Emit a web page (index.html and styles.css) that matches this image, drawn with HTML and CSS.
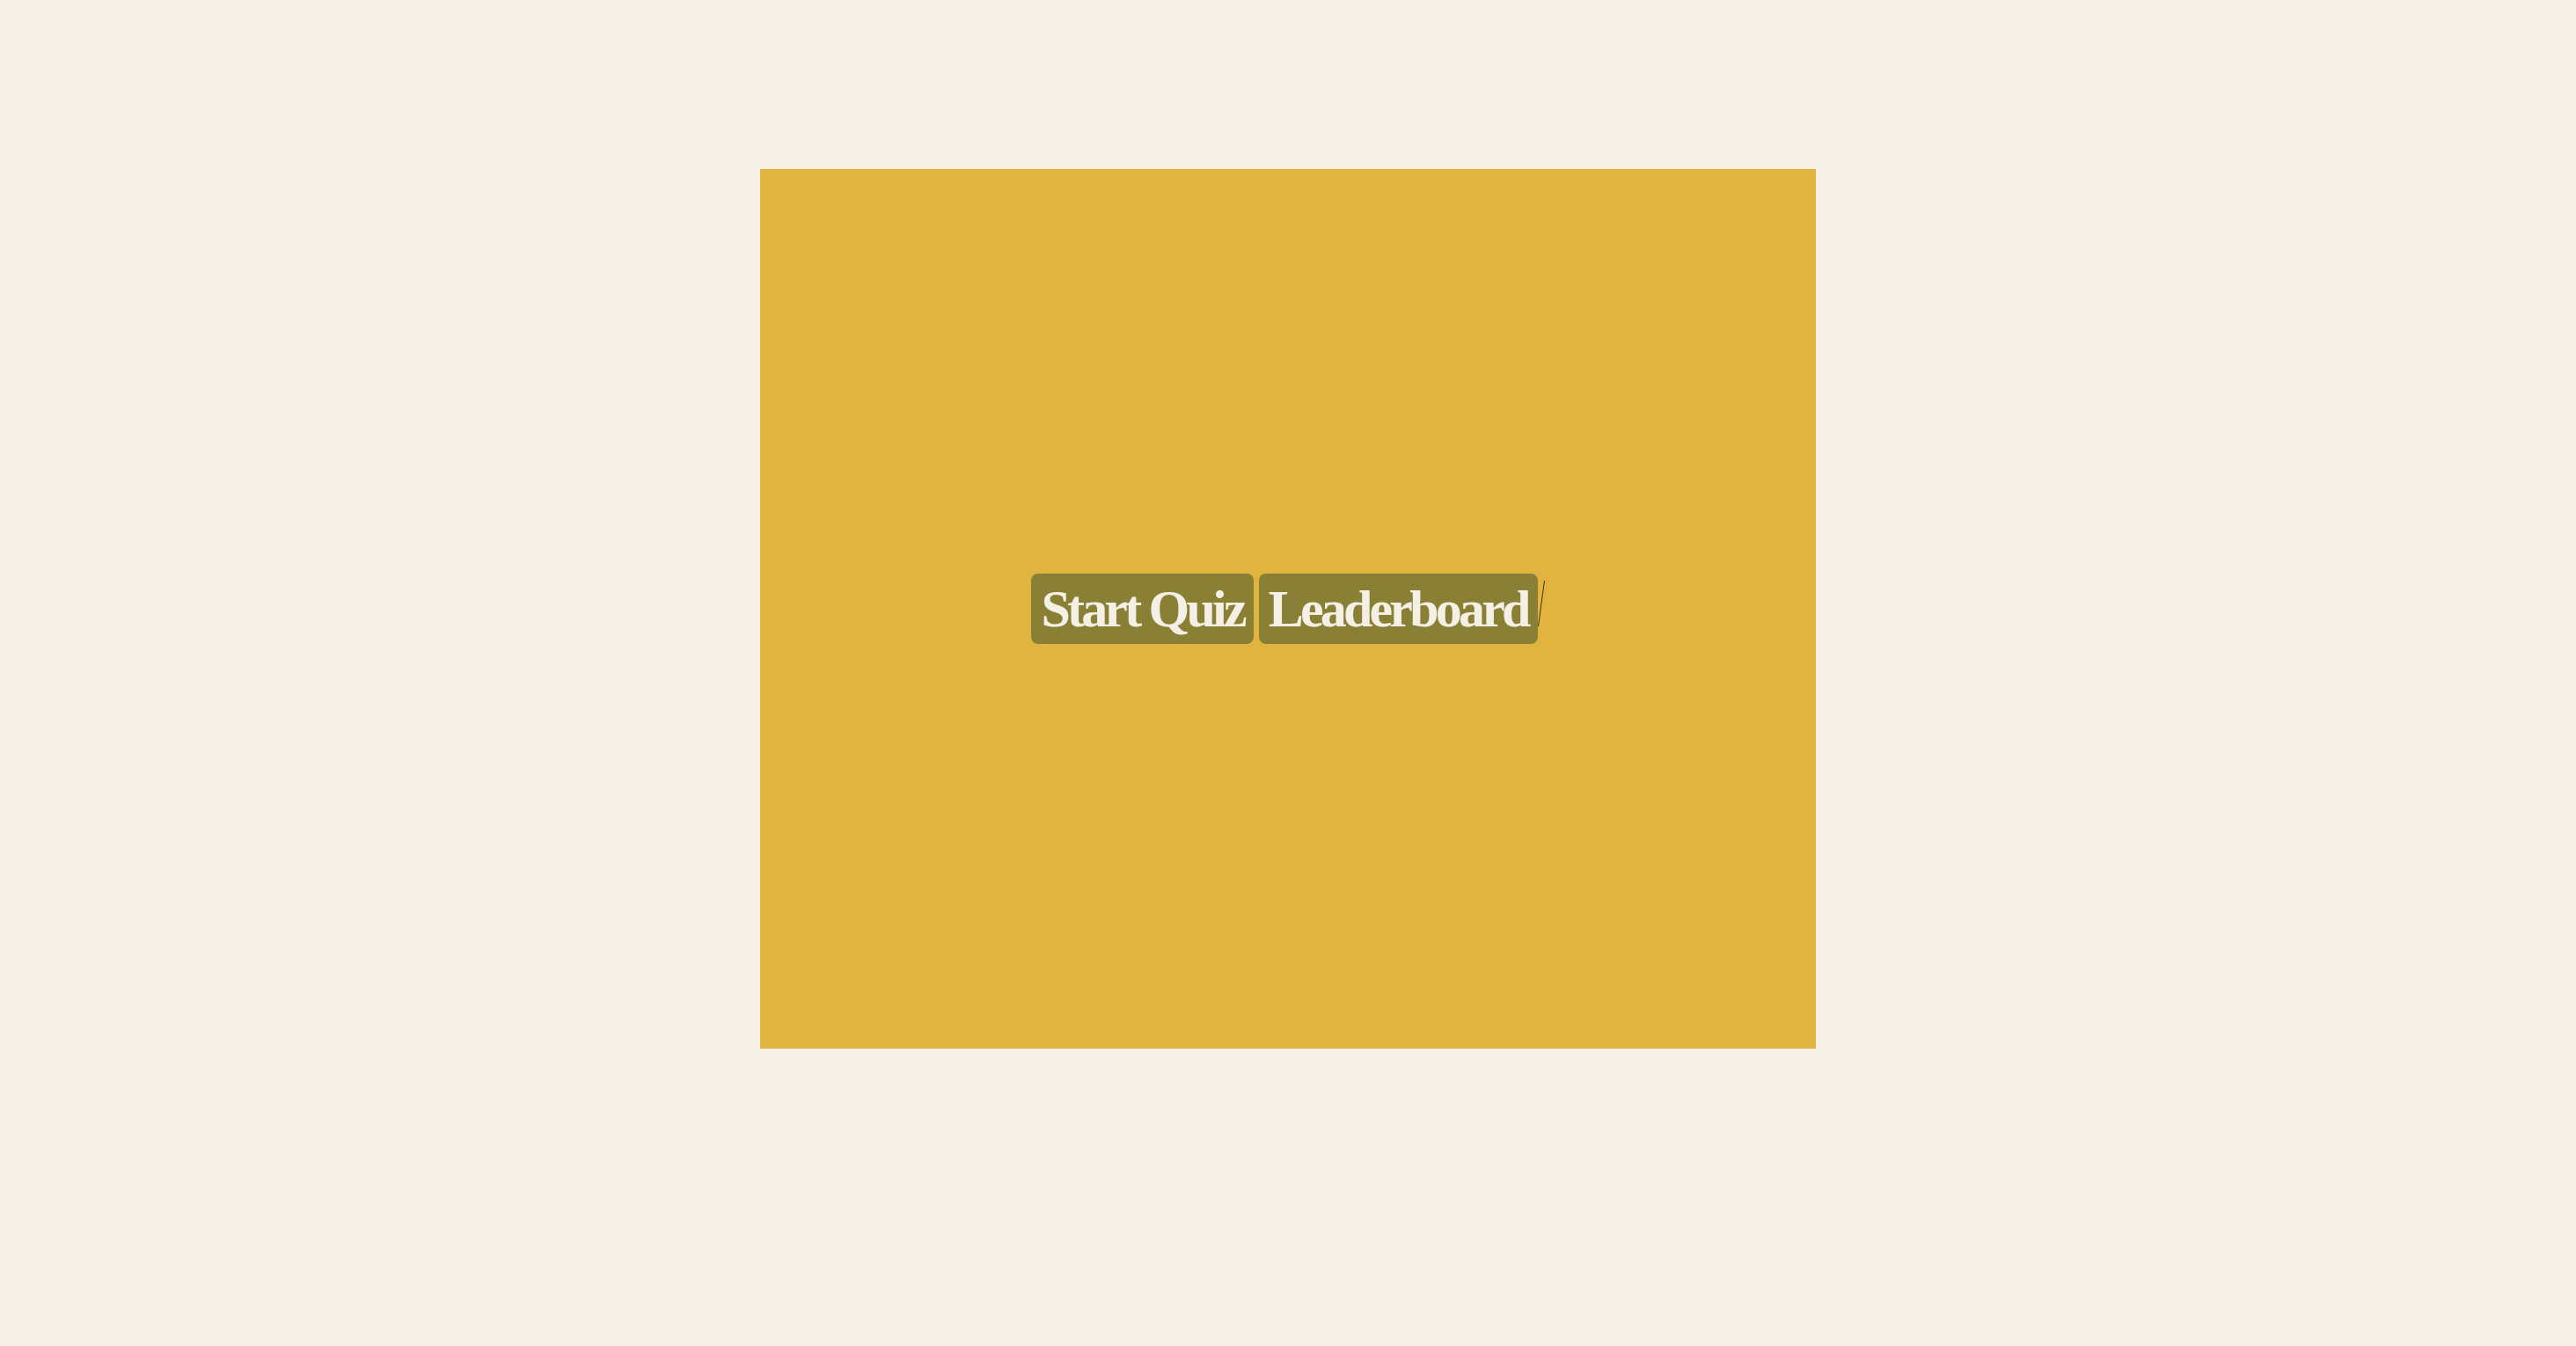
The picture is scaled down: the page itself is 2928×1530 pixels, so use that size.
FILE: index.html
```html
<!DOCTYPE html>
<html>
<head>
<meta charset="utf-8">
<link rel="stylesheet" href="styles.css">
</head>
<body>
<div class="stage">
  <div class="menu">
    <button class="btn">Start Quiz</button>
    <button class="btn">Leaderboard</button>
    <svg class="caret" width="8" height="52" viewBox="0 0 8 52"><line x1="7.5" y1="0" x2="0.5" y2="52" stroke="#3a3420" stroke-width="1"/></svg>
  </div>
</div>
</body>
</html>
```
FILE: styles.css
```css
html, body {
  margin: 0;
  padding: 0;
  background: #f5f0e5;
  height: 100%;
}
body {
  display: flex;
  flex-direction: column;
  align-items: center;
}
.stage {
  margin-top: 192px;
  width: 1200px;
  height: 1000px;
  background: #e0b43e;
  display: flex;
  align-items: center;
  justify-content: center;
}
.menu {
  display: flex;
  align-items: center;
  gap: 6px;
}
.btn {
  height: 80px;
  padding: 0 11px;
  border: none;
  border-radius: 8px;
  background: #8a8035;
  color: #f5f0e5;
  font-family: "Liberation Serif", "DejaVu Serif", serif;
  font-weight: bold;
  font-size: 60px;
  letter-spacing: -3.8px;
  line-height: 80px;
  cursor: pointer;
}
.caret {
  display: block;
  margin-left: -6px;
  margin-top: -12px;
}
```
